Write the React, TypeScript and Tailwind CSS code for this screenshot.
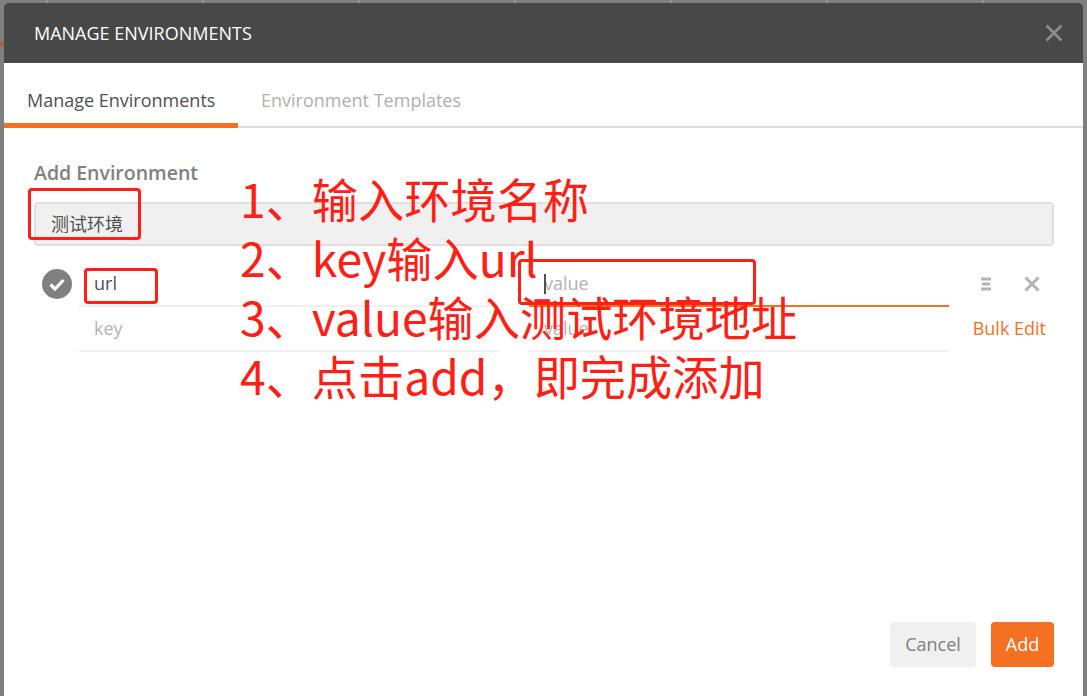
const sans = '"Open Sans", "Noto Sans CJK SC", sans-serif';

function Redbox({ className }: { className: string }) {
  return <div className={`absolute rounded-[4px] border-[3px] border-[#fe2015] ${className}`} />;
}

function Note({ children }: { children: React.ReactNode }) {
  return <div className="h-[59px] leading-[59px] whitespace-nowrap">{children}</div>;
}

const dividers = [0, 1, 2, 3, 4, 5, 6];

export default function App() {
  return (
    <div className="relative w-[1087px] h-[696px] overflow-hidden bg-[#7f7f7f] pt-[3px] pl-[4px] pr-[4px]" style={{ fontFamily: sans }}>
      <div className="absolute left-[-108px] top-0 h-[3px] flex">
        {dividers.map((d) => (
          <div key={d} className="w-[156px] h-[3px] border-r-2 border-[#949494]" />
        ))}
      </div>
      <div className="absolute left-0 top-[42px] w-[4px] h-[5px] bg-[#a5653c]" />
      <div className="relative h-[693px] flex flex-col bg-white rounded-t-[4px] overflow-hidden">
        <header className="h-[60px] shrink-0 bg-[#484848] flex items-center justify-between pl-[30px] pr-[19px] text-white">
          <span className="text-[18px]">MANAGE ENVIRONMENTS</span>
          <svg width="20" height="20" viewBox="0 0 20 20" className="text-[#8e8e8e]">
            <path d="M2.5 2.5L17.5 17.5M17.5 2.5L2.5 17.5" stroke="currentColor" strokeWidth="2.6" />
          </svg>
        </header>
        <nav className="h-[65px] shrink-0 flex items-end border-b-[2px] border-[#dedede]">
          <div className="w-[234px] h-[41px] -mb-[2px] border-b-[5px] border-[#f47023] pl-[23px] text-[#505050] text-[18px] leading-[26px]">Manage Environments</div>
          <div className="h-[39px] pl-[23px] text-[#b0b0b0] text-[18px] leading-[26px]">Environment Templates</div>
        </nav>
        <main className="flex-1 flex flex-col pl-[30px] pr-[29px] pt-[33px]">
          <h2 className="h-[24px] text-[19.5px] leading-[24px] font-semibold text-[#808080]">Add Environment</h2>
          <div className="mt-[17px] h-[44px] rounded-[4px] bg-[#f0f0f0] border-2 border-[#e0e0e0] pl-[15px] flex items-center text-[18px] text-[#505050]">测试环境</div>
          <div className="mt-[16px] flex">
            <div className="w-[45px] flex pt-[7px] pl-[8px]">
              <svg width="30" height="30" viewBox="0 0 30 30">
                <circle cx="15" cy="15" r="15" fill="#808080" />
                <path d="M8.5 15.5L13 20L21.5 11" fill="none" stroke="white" strokeWidth="3.2" />
              </svg>
            </div>
            <div className="w-[870px] flex flex-col">
              <div className="h-[45px] flex gap-[30px]">
                <div className="w-[420px] border-b-2 border-[#f0f0f0] pl-[15px] text-[18px] leading-[43px] text-[#505050]">url</div>
                <div className="relative flex-1 border-b-2 border-[#f47023] pl-[15px] text-[18px] leading-[43px] text-[#b3b3b3]">
                  <span className="absolute left-[15px] top-[12px] w-[2px] h-[20px] bg-[#505050]" />
                  value
                </div>
              </div>
              <div className="h-[45px] flex gap-[30px]">
                <div className="w-[420px] border-b-2 border-[#f0f0f0] pl-[15px] text-[18px] leading-[43px] text-[#b3b3b3]">key</div>
                <div className="flex-1 border-b-2 border-[#f0f0f0] pl-[15px] text-[18px] leading-[43px] text-[#b3b3b3]">value</div>
              </div>
            </div>
            <div className="flex-1 flex flex-col items-end">
              <div className="h-[45px] w-full flex items-center justify-end gap-[33px] pr-[14px] pb-[2px]">
                <svg width="10" height="14" viewBox="0 0 10 14">
                  <path d="M0 2H10M1 7H9M0 12H10" stroke="#b3b3b3" strokeWidth="3" />
                </svg>
                <svg width="16" height="16" viewBox="0 0 16 16">
                  <path d="M1.5 1.5L14.5 14.5M14.5 1.5L1.5 14.5" stroke="#b3b3b3" strokeWidth="3" />
                </svg>
              </div>
              <div className="h-[45px] pr-[8px] text-[18px] leading-[43px] text-[#f47023] whitespace-nowrap">Bulk Edit</div>
            </div>
          </div>
          <div className="mt-auto mb-[29px] flex justify-end gap-[15px]">
            <button className="w-[86px] h-[45px] rounded-[4px] bg-[#f0f0f0] text-[#808080] text-[18px]">Cancel</button>
            <button className="w-[63px] h-[45px] rounded-[4px] bg-[#f47023] text-white text-[18px]">Add</button>
          </div>
        </main>
      </div>
      <Redbox className="left-[28px] top-[188px] w-[113px] h-[52px]" />
      <Redbox className="left-[84px] top-[268px] w-[74px] h-[36px]" />
      <Redbox className="left-[518px] top-[259px] w-[238px] h-[46px]" />
      <div className="absolute left-[240px] top-[168px] text-[#fe2015] text-[46.2px]" style={{ fontFamily: '"Noto Sans CJK SC", sans-serif' }}>
        <Note>1、输入环境名称</Note>
        <Note>2、key输入url</Note>
        <Note>3、value输入测试环境地址</Note>
        <Note>4、点击add，即完成添加</Note>
      </div>
    </div>
  );
}
